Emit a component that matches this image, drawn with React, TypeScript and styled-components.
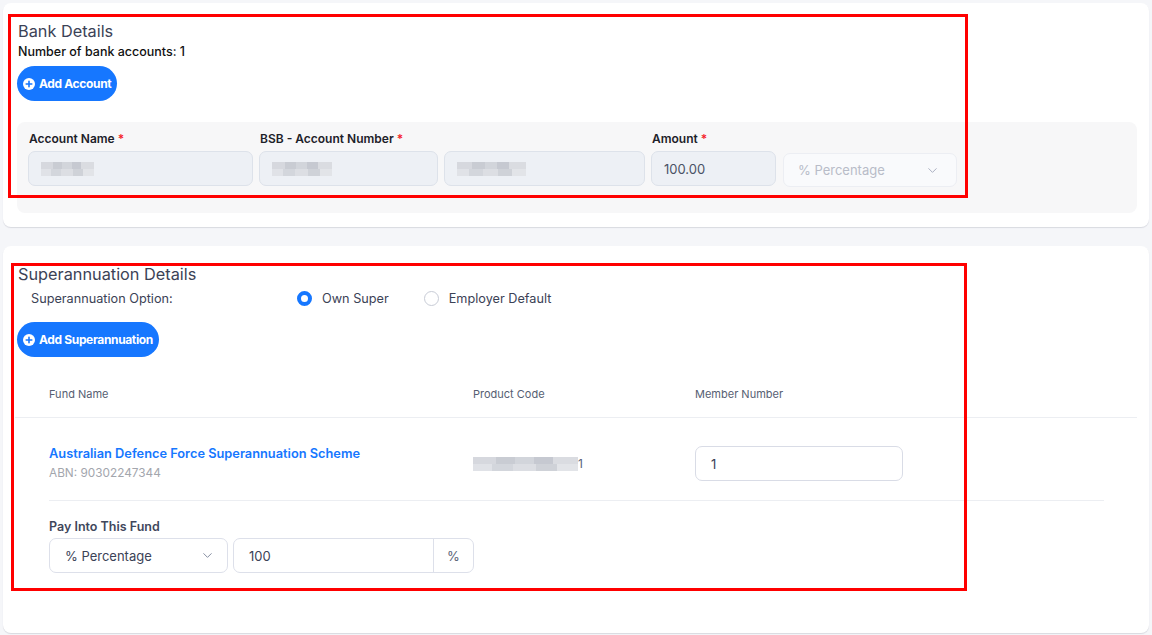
import React from "react";
import styled, { createGlobalStyle } from "styled-components";
import { ChevronDown } from "lucide-react";

const Global = createGlobalStyle`
  html, body { margin: 0; padding: 0; }
  body {
    background: #f5f6f9;
    font-family: Inter, "Noto Sans", "Liberation Sans", sans-serif;
    color: #3b4256;
  }
  * { box-sizing: border-box; }
`;

const Page = styled.div`
  position: relative;
  width: 1152px;
  height: 635px;
  padding: 3px 3px 0 3px;
  display: flex;
  flex-direction: column;
  gap: 19px;
  overflow: hidden;
`;

const Card = styled.section<{ $pb: number }>`
  background: #fff;
  border-radius: 8px;
  box-shadow: 0 1px 1px rgba(40, 50, 80, 0.14);
  padding: 18px 12px ${(p) => p.$pb}px 12px;
  display: flex;
  flex-direction: column;
`;

const Title = styled.h2`
  margin: 0 0 0 3px;
  font-size: 16.3px;
  line-height: 20px;
  font-weight: 400;
  color: #3b4256;
`;

const CountText = styled.div`
  margin: 3px 0 0 3px;
  font-size: 12.5px;
  line-height: 16px;
  font-weight: 500;
  color: #111;
`;

const PillButton = styled.button<{ $mt: number }>`
  align-self: flex-start;
  margin: ${(p) => p.$mt}px 0 0 2px;
  height: 35px;
  padding: 0 6px 0 6px;
  border: none;
  border-radius: 18px;
  background: #1677ff;
  color: #fff;
  font-family: Inter, "Liberation Sans", sans-serif;
  font-weight: 700;
  font-size: 12px;
  letter-spacing: -0.35px;
  display: flex;
  align-items: center;
  gap: 4px;
  cursor: pointer;
`;

const PlusIcon = () => (
  <svg width="12" height="12" viewBox="0 0 12 12">
    <circle cx="6" cy="6" r="6" fill="#fff" />
    <path d="M6 3.2v5.6M3.2 6h5.6" stroke="#1677ff" strokeWidth="1.6" strokeLinecap="round" />
  </svg>
);

const Panel = styled.div`
  margin: 21px 0 0 2px;
  background: #f7f7f8;
  border-radius: 8px;
  padding: 9px 11px 27px 11px;
  display: flex;
  gap: 6px;
  align-items: flex-end;
`;

const Field = styled.div<{ $w: number }>`
  display: flex;
  flex-direction: column;
  width: ${(p) => p.$w}px;
`;

const FieldLabel = styled.label`
  font-size: 12px;
  line-height: 16px;
  font-weight: 600;
  color: #1d2129;
  margin: 0 0 4px 1px;
  white-space: nowrap;
  span { color: #f5222d; }
`;

const DisabledInput = styled.div<{ $w?: number }>`
  height: 35px;
  width: ${(p) => (p.$w ? `${p.$w}px` : "100%")};
  background: #edf0f5;
  border: 1px solid #dde2ea;
  border-radius: 7px;
  display: flex;
  align-items: center;
  padding: 0 12px;
  font-size: 13px;
  color: #4a5265;
`;

const Redact = styled.div<{ $w: number }>`
  width: ${(p) => p.$w}px;
  height: 14px;
  background:
    linear-gradient(90deg,
      #d6d8de 0 22%, #c9ccd3 22% 40%, #d2d5db 40% 58%, #c6c9d1 58% 76%, #dadce1 76% 100%) top / 100% 50% no-repeat,
    linear-gradient(90deg,
      #e0e2e7 0 18%, #d3d6dc 18% 38%, #dcdee3 38% 60%, #cfd2d8 60% 80%, #e2e4e8 80% 100%) bottom / 100% 50% no-repeat;
`;

const GhostSelect = styled.div`
  width: 174px;
  height: 34px;
  margin: 0 0 -1px 1px;
  background: #f9fafc;
  border: 1px solid #eceef3;
  border-radius: 7px;
  display: flex;
  align-items: center;
  justify-content: space-between;
  padding: 0 16px 0 14px;
  font-size: 13px;
  color: #b8bcc8;
`;

const OptionRow = styled.div`
  margin: 4px 0 0 16px;
  height: 20px;
  display: flex;
  align-items: center;
  font-size: 12.7px;
  color: #3b4256;
`;

const OptionLabel = styled.div`
  width: 266px;
`;

const RadioItem = styled.label`
  display: flex;
  align-items: center;
  gap: 10px;
  margin-right: 35px;
  color: #3b4256;
`;

const RadioDot = styled.span<{ $on?: boolean }>`
  width: 15px;
  height: 15px;
  border-radius: 50%;
  background: #fff;
  border: ${(p) => (p.$on ? "4.5px solid #1677ff" : "1px solid #c8ccd6")};
`;

const TableHead = styled.div`
  padding: 29px 0 15px 34px;
  border-bottom: 1px solid #eceef2;
  display: grid;
  grid-template-columns: 424px 222px 1fr;
  font-size: 11px;
  line-height: 16px;
  color: #565e72;
`;

const TableRow = styled.div`
  margin: 0 33px 0 34px;
  padding: 28px 0 19px 0;
  border-bottom: 1px solid #eceef2;
  display: grid;
  grid-template-columns: 424px 222px 1fr;
  align-items: center;
`;

const FundName = styled.div`
  font-size: 12.8px;
  line-height: 16px;
  font-weight: 600;
  color: #1677ff;
`;

const Abn = styled.div`
  margin-top: 3px;
  font-size: 11.8px;
  line-height: 16px;
  color: #a3a6ad;
`;

const CodeCell = styled.div`
  display: flex;
  align-items: center;
  font-size: 12px;
  color: #5a6378;
`;

const TextInput = styled.div<{ $w: number }>`
  width: ${(p) => p.$w}px;
  height: 35px;
  border: 1px solid #d9dce6;
  border-radius: 7px;
  background: #fff;
  display: flex;
  align-items: center;
  padding: 0 15px;
  font-size: 13px;
  color: #3b4256;
`;

const PaySection = styled.div`
  margin: 0 0 0 34px;
  padding-top: 18px;
  display: flex;
  flex-direction: column;
`;

const PayLabel = styled.div`
  font-size: 12.5px;
  line-height: 16px;
  font-weight: 600;
  color: #3f475c;
  margin-bottom: 3px;
`;

const PayRow = styled.div`
  display: flex;
  gap: 5px;
`;

const Select = styled.div`
  width: 179px;
  height: 35px;
  border: 1px solid #dde0ea;
  border-radius: 7px;
  background: #fff;
  display: flex;
  align-items: center;
  justify-content: space-between;
  padding: 0 12px 0 15px;
  font-size: 13px;
  color: #3b4256;
`;

const InputGroup = styled.div`
  width: 241px;
  height: 35px;
  border: 1px solid #dde0ea;
  border-radius: 7px;
  background: #fff;
  display: flex;
  font-size: 13px;
  color: #3b4256;
`;

const GroupInput = styled.div`
  flex: 1;
  display: flex;
  align-items: center;
  padding: 0 15px;
`;

const Addon = styled.div`
  width: 40px;
  border-left: 1px solid #dde0ea;
  display: flex;
  align-items: center;
  justify-content: center;
  color: #5a6378;
`;

const Annotation = styled.div<{ $l: number; $t: number; $w: number; $h: number }>`
  position: absolute;
  left: ${(p) => p.$l}px;
  top: ${(p) => p.$t}px;
  width: ${(p) => p.$w}px;
  height: ${(p) => p.$h}px;
  border: 3px solid #ff0000;
  pointer-events: none;
`;

export default function App() {
  return (
    <>
      <Global />
      <Page>
        <Card $pb={14}>
          <Title>Bank Details</Title>
          <CountText>Number of bank accounts: 1</CountText>
          <PillButton $mt={6}>
            <PlusIcon />
            Add Account
          </PillButton>
          <Panel>
            <Field $w={225}>
              <FieldLabel>
                Account Name <span>*</span>
              </FieldLabel>
              <DisabledInput>
                <Redact $w={53} />
              </DisabledInput>
            </Field>
            <Field $w={179}>
              <FieldLabel>
                BSB - Account Number <span>*</span>
              </FieldLabel>
              <DisabledInput>
                <Redact $w={60} />
              </DisabledInput>
            </Field>
            <DisabledInput $w={201}>
              <Redact $w={69} />
            </DisabledInput>
            <Field $w={125}>
              <FieldLabel>
                Amount <span>*</span>
              </FieldLabel>
              <DisabledInput>100.00</DisabledInput>
            </Field>
            <GhostSelect>
              % Percentage
              <ChevronDown size={15} strokeWidth={1.5} color="#a5abbd" />
            </GhostSelect>
          </Panel>
        </Card>

        <Card $pb={60}>
          <Title>Superannuation Details</Title>
          <OptionRow>
            <OptionLabel>Superannuation Option:</OptionLabel>
            <RadioItem>
              <RadioDot $on />
              Own Super
            </RadioItem>
            <RadioItem>
              <RadioDot />
              Employer Default
            </RadioItem>
          </OptionRow>
          <PillButton $mt={14}>
            <PlusIcon />
            Add Superannuation
          </PillButton>
          <TableHead>
            <div>Fund Name</div>
            <div>Product Code</div>
            <div>Member Number</div>
          </TableHead>
          <TableRow>
            <div>
              <FundName>Australian Defence Force Superannuation Scheme</FundName>
              <Abn>ABN: 90302247344</Abn>
            </div>
            <CodeCell>
              <Redact $w={105} />1
            </CodeCell>
            <TextInput $w={208}>1</TextInput>
          </TableRow>
          <PaySection>
            <PayLabel>Pay Into This Fund</PayLabel>
            <PayRow>
              <Select>
                % Percentage
                <ChevronDown size={15} strokeWidth={1.5} color="#7d859b" />
              </Select>
              <InputGroup>
                <GroupInput>100</GroupInput>
                <Addon>%</Addon>
              </InputGroup>
            </PayRow>
          </PaySection>
        </Card>

        <Annotation $l={8} $t={14} $w={960} $h={184} />
        <Annotation $l={11} $t={263} $w={956} $h={328} />
      </Page>
    </>
  );
}
